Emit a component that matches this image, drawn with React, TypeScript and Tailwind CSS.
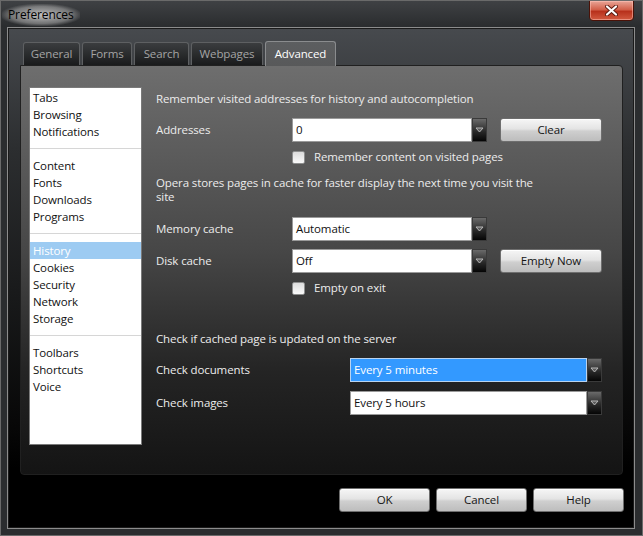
import React from "react";

const font = { fontFamily: '"Open Sans", "Noto Sans", sans-serif' };

const Arrow = () => (
  <div className="flex h-[24px] w-[15px] items-center justify-center border border-[#3a3a3a] bg-[linear-gradient(to_bottom,#6a6a6a,#2a2a2a_55%,#050505)]">
    <svg width="9" height="6" viewBox="0 0 9 6">
      <path d="M1 1 L8 1 L4.5 5 Z" fill="#5a5a5a" stroke="#b8b8b8" strokeWidth="1" />
    </svg>
  </div>
);

const Select = (props: { value: string; width: string; selected?: boolean }) => {
  const { value, width, selected } = props;
  return (
    <div className="flex items-center">
      <div
        className={`flex h-[24px] items-center border pl-[3px] ${width} ${
          selected ? "border-[#b9d3f0] bg-[#3399ff] text-white" : "border-[#9a9a9a] bg-white text-[#111]"
        }`}
      >
        {value}
      </div>
      <Arrow />
    </div>
  );
};

const Button = (props: { label: string; className?: string }) => (
  <div
    className={`flex h-[24px] items-center justify-center rounded-[3px] border border-[#6e6e6e] bg-[linear-gradient(to_bottom,#f6f6f6,#e4e4e4_45%,#cfcfcf_55%,#bdbdbd)] text-[#151515] shadow-[inset_0_1px_0_#fff] ${props.className ?? ""}`}
  >
    {props.label}
  </div>
);

const Checkbox = (props: { label: string }) => (
  <div className="flex h-[14px] items-center gap-[9px]">
    <div className="h-[13px] w-[13px] rounded-[2px] border border-[#8e8f8f] bg-[linear-gradient(to_bottom,#dcdcdc,#fafafa)]" />
    <span>{props.label}</span>
  </div>
);

const Row = (props: { label: string; labelWidth: string; className?: string; children: React.ReactNode }) => (
  <div className={`flex h-[24px] items-center ${props.className ?? ""}`}>
    <span className={props.labelWidth}>{props.label}</span>
    {props.children}
  </div>
);

const groups = [
  ["Tabs", "Browsing", "Notifications"],
  ["Content", "Fonts", "Downloads", "Programs"],
  ["History", "Cookies", "Security", "Network", "Storage"],
  ["Toolbars", "Shortcuts", "Voice"],
];

const tabs = [
  { name: "General", w: "w-[57px]" },
  { name: "Forms", w: "w-[50px]" },
  { name: "Search", w: "w-[55px]" },
  { name: "Webpages", w: "w-[72px]" },
  { name: "Advanced", w: "w-[71px]" },
];

export default function App() {
  return (
    <div
      style={font}
      className="flex h-[536px] w-[643px] flex-col overflow-hidden border border-[#6a6a6a] bg-[#2b2d2f] text-[11.5px] tracking-[-0.12px]"
    >
      {/* title bar */}
      <div className="flex h-[26px] shrink-0 items-start bg-[linear-gradient(to_bottom,#3f4144,#2a2c2e)]">
        <span className="ml-[1px] mt-[3px] bg-[radial-gradient(ellipse_at_center,rgba(205,205,205,0.9),rgba(170,170,170,0.55)_55%,rgba(120,120,120,0)_75%)] px-[6px] py-[3px] text-[12px] font-medium leading-[16px] text-black">
          Preferences
        </span>
        <div className="flex-1" />
        <div className="mr-[8px] mt-[-1px] flex h-[21px] w-[45px] items-center justify-center rounded-b-[4px] border border-[#4a1208] bg-[linear-gradient(to_bottom,#e9a597,#d2604a_45%,#b8311c_55%,#d25a40)] shadow-[inset_0_0_0_1px_rgba(255,200,190,0.5)]">
          <svg width="13" height="11" viewBox="0 0 13 11">
            <path d="M2 1.5 L11 9.5 M11 1.5 L2 9.5" stroke="#5a1a10" strokeWidth="4" strokeLinecap="round" />
            <path d="M2 1.5 L11 9.5 M11 1.5 L2 9.5" stroke="#ffffff" strokeWidth="2.2" strokeLinecap="round" />
          </svg>
        </div>
      </div>

      {/* client area */}
      <div className="flex flex-1 pb-[6px] pl-[6px] pr-[7px]">
        <div className="flex flex-1 flex-col border border-[#8c8c8c] bg-[linear-gradient(to_bottom,#474a4e_0px,#2c2e30_120px,#070707_400px,#000_440px)] pl-[12px] pr-[11px] pt-[14px] shadow-[inset_0_0_0_1px_#1a1a1a]">
          {/* tabs */}
          <div className="flex h-[23px] items-end gap-[2px] pl-[3px]">
            {tabs.map(t =>
              t.name === "Advanced" ? (
                <div
                  key={t.name}
                  className={`relative z-10 -mb-px flex h-[25px] items-center justify-center rounded-t-[3px] border border-b-0 border-[#8a8c8e] bg-[linear-gradient(to_bottom,#5c5e60,#58595a)] text-white ${t.w}`}
                >
                  {t.name}
                </div>
              ) : (
                <div
                  key={t.name}
                  className={`flex h-[23px] items-center justify-center rounded-t-[3px] border border-b-0 border-[#5e6062] bg-[linear-gradient(to_bottom,#3b3d3f,#1a1b1c)] text-[#a4a4a4] ${t.w}`}
                >
                  {t.name}
                </div>
              )
            )}
          </div>

          {/* panel */}
          <div className="flex h-[410px] rounded-[4px] rounded-tl-none border border-[#202020] bg-[linear-gradient(to_bottom,#6e6e6e,#474747_45%,#242424_75%,#141414)] pl-[8px] pt-[21px]">
            {/* category list */}
            <div className="flex h-[358px] w-[113px] shrink-0 flex-col border border-[#7a7a7a] bg-white pt-px text-[#111]">
              {groups.map((g, gi) => (
                <div key={gi} className="flex flex-col">
                  {gi > 0 && (
                    <div className="flex h-[17px] items-center">
                      <div className="h-px w-full bg-[#d6d6d6]" />
                    </div>
                  )}
                  {g.map(item => (
                    <div
                      key={item}
                      className={`flex h-[17px] items-center pl-[3px] ${
                        item === "History" ? "bg-[#9dcbf2] text-white" : ""
                      }`}
                    >
                      {item}
                    </div>
                  ))}
                </div>
              ))}
            </div>

            {/* settings */}
            <div className="ml-[14px] flex flex-col text-[#ececec]">
              <div className="mt-[4px] leading-[16px]">Remember visited addresses for history and autocompletion</div>
              <Row label="Addresses" labelWidth="w-[136px]" className="mt-[11px]">
                <Select value="0" width="w-[180px]" />
                <Button label="Clear" className="ml-[13px] w-[102px]" />
              </Row>
              <div className="ml-[136px] mt-[8px]">
                <Checkbox label="Remember content on visited pages" />
              </div>
              <div className="mt-[12px] leading-[14px]">
                <div>Opera stores pages in cache for faster display the next time you visit the</div>
                <div>site</div>
              </div>
              <Row label="Memory cache" labelWidth="w-[136px]" className="mt-[13px]">
                <Select value="Automatic" width="w-[180px]" />
              </Row>
              <Row label="Disk cache" labelWidth="w-[136px]" className="mt-[8px]">
                <Select value="Off" width="w-[180px]" />
                <Button label="Empty Now" className="ml-[13px] w-[102px]" />
              </Row>
              <div className="ml-[136px] mt-[8px]">
                <Checkbox label="Empty on exit" />
              </div>
              <div className="mt-[37px] leading-[14px]">Check if cached page is updated on the server</div>
              <Row label="Check documents" labelWidth="w-[194px]" className="mt-[12px]">
                <Select value="Every 5 minutes" width="w-[237px]" selected />
              </Row>
              <Row label="Check images" labelWidth="w-[194px]" className="mt-[9px]">
                <Select value="Every 5 hours" width="w-[237px]" />
              </Row>
            </div>
          </div>

          {/* dialog buttons */}
          <div className="mr-[-1px] mt-[13px] flex justify-end gap-[6px]">
            <Button label="OK" className="w-[91px]" />
            <Button label="Cancel" className="w-[91px]" />
            <Button label="Help" className="w-[91px]" />
          </div>
        </div>
      </div>
    </div>
  );
}
